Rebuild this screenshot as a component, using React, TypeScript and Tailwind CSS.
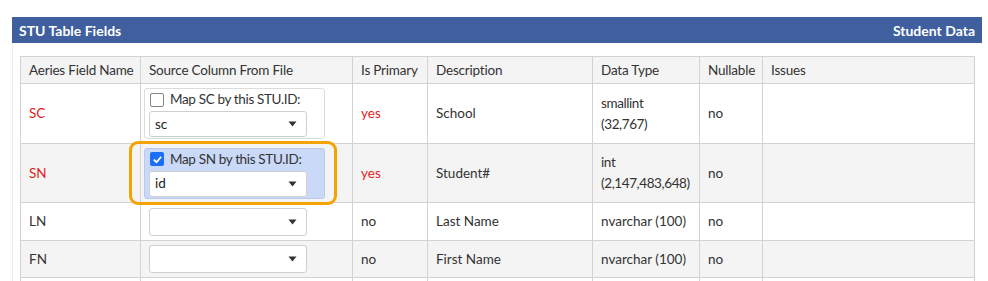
import React from "react";

const Caret = () => (
  <svg width="9" height="6" viewBox="0 0 9 6" className="shrink-0">
    <path d="M0.5 0.5 L8.5 0.5 L4.5 5.5 Z" fill="#333" />
  </svg>
);

const Select = ({ value, h = "h-[26px]" }: { value: string; h?: string }) => (
  <div
    className={`${h} w-[158px] bg-white border border-[#cfcfcf] rounded-[3px] flex items-center justify-between pl-[5px] pr-[9px] text-[13.5px] text-[#222]`}
  >
    <span>{value}</span>
    <Caret />
  </div>
);

const MapBox = ({ code, checked, value }: { code: string; checked: boolean; value: string }) => (
  <div
    className={`w-[181px] h-[51px] rounded-[3px] border px-[4px] pt-[1px] flex flex-col ${
      checked ? "bg-[#c9d9f7] border-[#b8c9ec]" : "bg-white border-[#dcdcdc]"
    }`}
  >
    <div className="flex items-center gap-[6px] h-[19px] pl-[1px]">
      {checked ? (
        <div className="w-[14px] h-[14px] rounded-[2px] bg-[#1a6ff5] flex items-center justify-center">
          <svg width="11" height="11" viewBox="0 0 12 12">
            <path d="M2 6.2 L4.9 9 L10 3" stroke="white" strokeWidth="2" fill="none" />
          </svg>
        </div>
      ) : (
        <div className="w-[14px] h-[14px] rounded-[2px] border border-[#858585] bg-white" />
      )}
      <span className="text-[13.5px] tracking-[-0.35px] text-[#333] whitespace-nowrap">
        Map {code} by this STU.ID:
      </span>
    </div>
    <div className="mt-[2px]">
      <Select value={value} />
    </div>
  </div>
);

export default function App() {
  const th =
    "border border-[#d2d2d2] px-[8px] text-left font-normal text-[13.5px] tracking-[-0.2px] text-[#333] align-middle whitespace-nowrap";
  const base = "border border-[#d2d2d2] text-[13.5px] text-[#333] align-middle whitespace-nowrap";
  const td = `${base} px-[8px]`;
  const dt = `${td} leading-[21px] tracking-[-0.4px]`;
  return (
    <div className="w-[988px] h-[281px] bg-white pt-[17px] font-['Lato',sans-serif] overflow-hidden">
      <div className="ml-[12px] w-[970px]">
        <div className="h-[26px] bg-[#3f5f9e] flex items-center justify-between px-[7px] text-white font-bold text-[14px]">
          <span>STU Table Fields</span>
          <span>Student Data</span>
        </div>
        <div className="border-l border-[#e6ecf4] pl-[7px] pt-[13px]">
          <table className="table-fixed border-collapse w-[954px]">
            <colgroup>
              <col className="w-[120px]" />
              <col className="w-[212px]" />
              <col className="w-[75px]" />
              <col className="w-[165px]" />
              <col className="w-[107px]" />
              <col className="w-[63px]" />
              <col className="w-[212px]" />
            </colgroup>
            <thead>
              <tr className="h-[27px] bg-[#f4f4f4]">
                <th className={th}>Aeries Field Name</th>
                <th className={th}>Source Column From File</th>
                <th className={th}>Is Primary</th>
                <th className={th}>Description</th>
                <th className={th}>Data Type</th>
                <th className={th}>Nullable</th>
                <th className={th}>Issues</th>
              </tr>
            </thead>
            <tbody>
              <tr className="h-[60px] bg-white">
                <td className={`${td} text-[#e31b1b]`}>SC</td>
                <td className={`${base} px-[3px]`}>
                  <MapBox code="SC" checked={false} value="sc" />
                </td>
                <td className={`${td} text-[#e31b1b]`}>yes</td>
                <td className={td}>School</td>
                <td className={dt}>
                  smallint
                  <br />
                  (32,767)
                </td>
                <td className={td}>no</td>
                <td className={td}></td>
              </tr>
              <tr className="h-[59px] bg-[#f4f4f4]">
                <td className={`${td} text-[#e31b1b]`}>SN</td>
                <td className={`${base} px-[3px] relative`}>
                  <MapBox code="SN" checked={true} value="id" />
                  <div className="absolute left-[-12px] right-[15px] top-[-3px] bottom-[-3px] border-[3px] border-[#f5a300] rounded-[9px] pointer-events-none" />
                </td>
                <td className={`${td} text-[#e31b1b]`}>yes</td>
                <td className={td}>Student#</td>
                <td className={dt}>
                  int
                  <br />
                  (2,147,483,648)
                </td>
                <td className={td}>no</td>
                <td className={td}></td>
              </tr>
              <tr className="h-[38px] bg-white">
                <td className={td}>LN</td>
                <td className={td}>
                  <Select value="" h="h-[28px]" />
                </td>
                <td className={td}>no</td>
                <td className={td}>Last Name</td>
                <td className={td}>nvarchar (100)</td>
                <td className={td}>no</td>
                <td className={td}></td>
              </tr>
              <tr className="h-[37px] bg-[#f4f4f4]">
                <td className={td}>FN</td>
                <td className={td}>
                  <Select value="" h="h-[28px]" />
                </td>
                <td className={td}>no</td>
                <td className={td}>First Name</td>
                <td className={td}>nvarchar (100)</td>
                <td className={td}>no</td>
                <td className={td}></td>
              </tr>
              <tr className="h-[37px] bg-white">
                <td className={td}></td>
                <td className={td}></td>
                <td className={td}></td>
                <td className={td}></td>
                <td className={td}></td>
                <td className={td}></td>
                <td className={td}></td>
              </tr>
            </tbody>
          </table>
        </div>
      </div>
    </div>
  );
}
